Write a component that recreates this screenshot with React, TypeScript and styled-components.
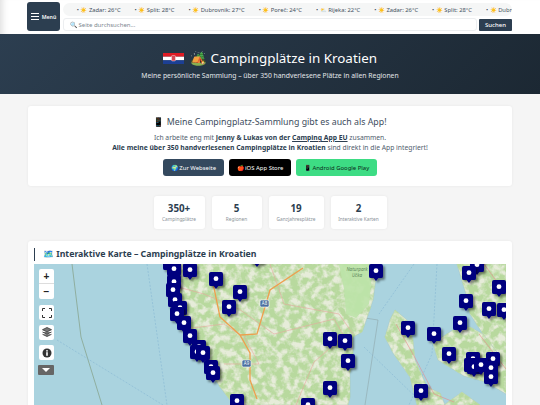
import React from "react"
import styled, { createGlobalStyle } from "styled-components"

const GlobalStyle = createGlobalStyle`
  html, body {
    margin: 0;
    height: 405px;
    overflow: hidden;
    background: #f5f5f5;
    font-family: "Noto Sans", "Open Sans", sans-serif;
    color: #2c3e50;
  }
`

const TopBar = styled.header`
  display: flex;
  gap: 3px;
  height: 34px;
  box-sizing: border-box;
  padding: 2px 28px 0 27px;
  background: #fff;
  box-shadow: inset 8px 0 7px -6px rgba(0, 0, 0, 0.14);
`
const MenuButton = styled.button`
  display: flex;
  align-items: center;
  justify-content: center;
  gap: 3px;
  width: 33px;
  height: 29px;
  padding: 0;
  border: 0;
  border-radius: 3px;
  background: #2c3e50;
  color: #fff;
  font: 600 5.2px "Noto Sans", sans-serif;
`
const BarColumn = styled.div`
  flex: 1;
  min-width: 0;
  display: flex;
  flex-direction: column;
  gap: 2px;
  padding-top: 1px;
`
const Ticker = styled.div`
  height: 13px;
  border-radius: 7px;
  background: #f5f6f6;
  overflow: hidden;
  display: flex;
  align-items: center;
`
const TickerTrack = styled.div`
  display: flex;
  gap: 14px;
  margin-left: -13px;
  white-space: nowrap;
  font-size: 5.8px;
  color: #44515e;
`
const TickerItem = styled.span`
  display: inline-flex;
  align-items: center;
  gap: 1.5px;
`
const SunIcon = styled.span`
  font-size: 5.5px;
`
const SearchRow = styled.form`
  display: flex;
  gap: 2px;
  align-items: center;
  margin: 0;
`
const SearchInput = styled.div`
  flex: 1;
  height: 13px;
  box-sizing: border-box;
  display: flex;
  align-items: center;
  gap: 2px;
  padding-left: 6px;
  border: 1px solid #eceef0;
  border-radius: 3px;
  font-size: 6px;
  color: #7d8790;
`
const SearchButton = styled.button`
  width: 33px;
  height: 12px;
  padding: 0;
  border: 0;
  border-radius: 1px;
  background: #2c3e50;
  color: #fff;
  font: 500 6px "Noto Sans", sans-serif;
`
const Hero = styled.section`
  height: 60px;
  background: linear-gradient(135deg, #2c3e50 0%, #1c2833 100%);
  color: #fff;
  text-align: center;
  display: flex;
  flex-direction: column;
  align-items: center;
  padding-top: 14px;
  box-sizing: border-box;
`
const HeroTitle = styled.h1`
  display: flex;
  align-items: center;
  gap: 6px;
  margin: 0;
  font-size: 13.4px;
  line-height: 20px;
  font-weight: 400;
`
const HeroSub = styled.p`
  margin: 3px 0 0;
  font-size: 6.8px;
  line-height: 10px;
  color: #e3e7ea;
`
const Main = styled.main`
  padding: 12px 28px 0;
  display: flex;
  flex-direction: column;
`
const Card = styled.section`
  background: #fff;
  border-radius: 3px;
  box-shadow: 0 0 3px rgba(0, 0, 0, 0.06);
`
const AppCard = styled(Card)`
  height: 80px;
  box-sizing: border-box;
  padding-top: 10px;
  text-align: center;
`
const AppTitle = styled.h2`
  margin: 0;
  font-size: 8.8px;
  line-height: 12px;
  font-weight: 400;
  color: #3d4d5d;
`
const AppText = styled.p`
  margin: 5px 0 0;
  font-size: 6.75px;
  line-height: 10px;
  color: #50606e;
  strong {
    font-weight: 700;
    color: #2c3e50;
  }
  u {
    font-weight: 700;
    color: #2c3e50;
  }
`
const ButtonRow = styled.div`
  display: flex;
  justify-content: center;
  gap: 5.5px;
  margin-top: 6px;
`
const StoreButton = styled.a<{ $bg: string; $fg: string }>`
  display: inline-flex;
  align-items: center;
  gap: 2px;
  height: 17px;
  padding: 0 7.5px;
  border-radius: 3px;
  background: ${p => p.$bg};
  color: ${p => p.$fg};
  font-size: 5.95px;
`
const StatsRow = styled.div`
  display: flex;
  justify-content: center;
  gap: 7px;
  margin-top: 10px;
`
const StatCard = styled(Card)<{ $w: number }>`
  width: ${p => p.$w}px;
  height: 33px;
  text-align: center;
  padding-top: 7px;
  box-sizing: border-box;
`
const StatValue = styled.div`
  font-size: 9.8px;
  line-height: 11px;
  font-weight: 700;
  color: #2c3e50;
`
const StatLabel = styled.div`
  margin-top: 2px;
  font-size: 4.8px;
  line-height: 7px;
  color: #8b939a;
`
const MapCard = styled(Card)`
  margin-top: 12px;
  height: 200px;
  padding: 7px 6px 0;
`
const MapHeading = styled.h3`
  margin: 0 0 3px;
  height: 13px;
  line-height: 13px;
  padding-left: 8px;
  border-left: 1px solid #2c3e50;
  font-size: 8.75px;
  font-weight: 700;
  color: #2c3e50;
`
const MapStage = styled.div`
  position: relative;
  height: 141px;
  overflow: hidden;
  background: #aad3df;
`
const MapLayer = styled.svg`
  display: block;
  width: 472px;
  height: 141px;
`
const Pin = styled.svg`
  position: absolute;
  width: 14px;
  height: 17px;
  filter: drop-shadow(2px 2px 1px rgba(0, 0, 0, 0.45));
`
const Controls = styled.div`
  position: absolute;
  left: 4px;
  top: 5px;
  display: flex;
  flex-direction: column;
  align-items: flex-start;
`
const ZoomBox = styled.div`
  width: 15px;
  background: #fff;
  border-radius: 2px;
  margin-bottom: 6px;
  margin-left: 1px;
`
const ControlCell = styled.div<{ $last?: boolean }>`
  height: 15px;
  box-sizing: border-box;
  display: flex;
  align-items: center;
  justify-content: center;
  border-bottom: ${p => (p.$last ? "0" : "1px solid #ddd")};
  color: #222;
  font: 700 10px "Liberation Sans", sans-serif;
`
const ControlBox = styled.div`
  width: 15px;
  height: 15px;
  margin-left: 1px;
  margin-bottom: 5px;
  background: #fff;
  border-radius: 2px;
  display: flex;
  align-items: center;
  justify-content: center;
  color: #333;
`
const CollapseBox = styled.div`
  width: 16px;
  height: 10px;
  border-radius: 1px;
  background: #666;
  display: flex;
  align-items: center;
  justify-content: center;
`

const weather = [
  ["☀️", "Zadar: 26°C"],
  ["☀️", "Split: 28°C"],
  ["☀️", "Dubrovnik: 27°C"],
  ["☀️", "Poreč: 24°C"],
  ["⛅", "Rijeka: 22°C"],
  ["☀️", "Zadar: 26°C"],
  ["☀️", "Split: 28°C"],
  ["☀️", "Dubrovnik: 27°C"],
]

const stats: [string, string, number][] = [
  ["350+", "Campingplätze", 51],
  ["5", "Regionen", 50],
  ["19", "Ganzjahresplätze", 55],
  ["2", "Interaktive Karten", 56],
]

// dot centres in map coordinates
const pins = [
  [136, -1], [140, 5], [156, 6], [182, 15], [206, 28], [195, 43], [140, 18], [139, 26],
  [141, 36], [146, 44], [143, 50], [150, 59], [156, 72], [165, 83], [163, 88], [169, 89],
  [177, 103], [179, 109], [203, 137], [223, -7], [342, 7], [443, 1], [435, 9], [465, 23],
  [432, 37], [455, 45], [470, 46], [426, 59], [374, 64], [400, 70], [296, 75], [311, 77],
  [314, 97], [415, 90], [439, 96], [439, 95], [459, 95], [437, 101], [440, 103], [447, 101],
  [457, 104], [457, 113], [296, 124], [387, 127], [274, 141],
]

const Shield = ({ x, y, t }: { x: number; y: number; t: string }) => (
  <g>
    <rect x={x} y={y} width="9" height="7" rx="1.5" fill="#4a6f9f" stroke="#fff" strokeWidth=".6" />
    <text x={x + 4.5} y={y + 5.2} fontSize="4.4" fill="#fff" textAnchor="middle" fontFamily="Noto Sans">
      {t}
    </text>
  </g>
)

const MapArt = () => (
  <MapLayer viewBox="0 0 472 141">
    <defs>
      <filter id="mottle" x="0" y="0" width="100%" height="100%" colorInterpolationFilters="sRGB">
        <feTurbulence type="fractalNoise" baseFrequency="0.14" numOctaves="3" seed="7" />
        <feColorMatrix values="0 0 0 0 .72  0 0 0 0 .85  0 0 0 0 .62  3.6 0 0 0 -1.15" />
        <feComposite in2="SourceAlpha" operator="in" />
        <feMerge>
          <feMergeNode in="SourceGraphic" />
          <feMergeNode />
        </feMerge>
      </filter>
    </defs>
    <rect width="472" height="141" fill="#aad3df" />
    {/* sea borders */}
    <path d="M38 0 L47 73 L68 141" fill="none" stroke="#8fae9f" strokeWidth="1" />
    <path d="M113 0 L133 141 M23 76 L129 141" fill="none" stroke="#7fb0d0" strokeWidth=".5" strokeDasharray="2 1.5" />
    <path d="M344 56 L331 141 M331 54 L344 56" fill="none" stroke="#8a9ea0" strokeWidth=".5" />
    <path d="M403 0 L398 90 L375 141 M330 83 L390 141 M380 0 L345 50" fill="none" stroke="#7fb0d0" strokeWidth=".5" strokeDasharray="2 1.5" />
    {/* Istria and the islands */}
    <g filter="url(#mottle)" fill="#e6ecd9" stroke="#9db9a8" strokeWidth=".3">
      <path d="M132 0 L342 0 L342 13 L339 36 L333 54 L328 68 L319 73 L319 89 L316 109 L316 133 L314 141 L200 141 L186 123 L176 107 L160 82 L148 60 L140 35 L134 12 Z" />
      <path d="M361 46 L373 56 L379 76 L381 96 L393 123 L406 129 L411 141 L383 141 L376 113 L359 89 L351 73 L356 56 Z" />
      <path d="M423 0 L472 0 L472 100 L449 70 L436 50 L432 30 Z" />
      <path d="M399 79 L419 66 L436 63 L449 70 L472 100 L472 130 L452 118 L430 112 L404 96 Z" />
      <path d="M410 141 L428 128 L446 141 Z" />
    </g>
    <path d="M305 0 L339 0 L335 40 L322 54 L312 50 L310 25 Z" fill="#bde3a9" opacity=".9" />
    <text fontSize="4.6" fontStyle="italic" fill="#5d8a5d" fontFamily="Noto Sans" textAnchor="middle">
      <tspan x="323" y="7">Naturpark</tspan>
      <tspan x="323" y="13">Učka</tspan>
    </text>
    {/* roads */}
    <g fill="none" stroke="#e8a8a0" strokeWidth=".6">
      <path d="M140 22 L170 30 L205 45 L240 70 L300 55 L310 72 L280 98 L262 141" />
      <path d="M236 0 L250 40 L305 50 L319 70 M150 65 L190 60 L206 71 M210 72 L225 100 L190 100" />
      <path d="M450 0 L472 30 M362 60 L380 92 L400 130 L420 138 M445 70 L472 105" stroke="#e58c8c" />
    </g>
    <path d="M179 19 L186 53 L206 71 L216 89 L216 116 L223 135 M206 71 L223 70 L236 26 L269 4" fill="none" stroke="#ee9f4e" strokeWidth="1.3" />
    <Shield x={226} y={36} t="A8" />
    <Shield x={208} y={96} t="A9" />
  </MapLayer>
)

const App: React.FC = () => (
  <>
    <GlobalStyle />
    <TopBar>
      <MenuButton>
        <svg width="8" height="7" viewBox="0 0 8 7">
          <path d="M0 .5h8M0 3.500h8M0 6.500h8" stroke="#fff" strokeWidth="1" />
        </svg>
        Menü
      </MenuButton>
      <BarColumn>
        <Ticker>
          <TickerTrack>
            <span>26°C</span>
            {weather.map(([icon, text], i) => (
              <TickerItem key={i}>
                <span>•</span>
                <SunIcon>{icon}</SunIcon>
                {text}
              </TickerItem>
            ))}
          </TickerTrack>
        </Ticker>
        <SearchRow>
          <SearchInput>🔍 Seite durchsuchen...</SearchInput>
          <SearchButton type="button">Suchen</SearchButton>
        </SearchRow>
      </BarColumn>
    </TopBar>
    <Hero>
      <HeroTitle>
        <svg width="21" height="11" viewBox="0 0 21 11">
          <rect width="21" height="3.7" fill="#e01b24" />
          <rect y="3.7" width="21" height="3.6" fill="#fff" />
          <rect y="7.3" width="21" height="3.7" fill="#1c3f94" />
          <rect x="8.500" y="2.500" width="4" height="5.500" rx="1" fill="#d94a55" stroke="#fff" strokeWidth=".4" />
        </svg>
        <span>🏕️ Campingplätze in Kroatien</span>
      </HeroTitle>
      <HeroSub>Meine persönliche Sammlung – über 350 handverlesene Plätze in allen Regionen</HeroSub>
    </Hero>
    <Main>
      <AppCard>
        <AppTitle>📱 Meine Campingplatz-Sammlung gibt es auch als App!</AppTitle>
        <AppText>
          Ich arbeite eng mit <strong>Jenny &amp; Lukas von der</strong> <u>Camping App EU</u> zusammen.
          <br />
          <strong>Alle meine über 350 handverlesenen Campingplätze in Kroatien</strong> sind direkt in die App integriert!
        </AppText>
        <ButtonRow>
          <StoreButton $bg="#34495e" $fg="#fff">🌍 Zur Webseite</StoreButton>
          <StoreButton $bg="#000" $fg="#fff">🍎 iOS App Store</StoreButton>
          <StoreButton $bg="#3ddc84" $fg="#0b2a1a">📱 Android Google Play</StoreButton>
        </ButtonRow>
      </AppCard>
      <StatsRow>
        {stats.map(([value, label, w]) => (
          <StatCard key={label} $w={w}>
            <StatValue>{value}</StatValue>
            <StatLabel>{label}</StatLabel>
          </StatCard>
        ))}
      </StatsRow>
      <MapCard>
        <MapHeading>🗺️ Interaktive Karte – Campingplätze in Kroatien</MapHeading>
        <MapStage>
          <MapArt />
          {pins.map(([x, y], i) => (
            <Pin key={i} viewBox="0 0 15 18" style={{ left: x - 7, top: y - 7 }}>
              <path d="M2 0h11a2 2 0 0 1 2 2v11a2 2 0 0 1-2 2h-3l-2.500 3-2.500-3H2a2 2 0 0 1-2-2V2a2 2 0 0 1 2-2z" fill="#00007f" />
              <circle cx="7.500" cy="7" r="2.600" fill="#fff" />
            </Pin>
          ))}
          <Controls>
            <ZoomBox>
              <ControlCell>+</ControlCell>
              <ControlCell $last>−</ControlCell>
            </ZoomBox>
            <ControlBox>
              <svg width="10" height="10" viewBox="0 0 10 10" fill="none" stroke="#333" strokeWidth="1">
                <path d="M.5 3V.5H3M7 .5h2.500V3M9.500 7v2.500H7M3 9.500H.5V7" />
              </svg>
            </ControlBox>
            <ControlBox>
              <svg width="10" height="11" viewBox="0 0 10 11">
                <path d="M5 .5l4.500 2.200L5 4.900.5 2.700zM.5 5L5 7.200 9.500 5M.5 7.300L5 9.500l4.500-2.200" fill="#777" stroke="#333" strokeWidth=".8" />
              </svg>
            </ControlBox>
            <ControlBox>
              <svg width="10" height="10" viewBox="0 0 10 10">
                <circle cx="5" cy="5" r="4.500" fill="#333" />
                <rect x="4.200" y="4.200" width="1.600" height="3.600" fill="#fff" />
                <circle cx="5" cy="2.800" r=".9" fill="#fff" />
              </svg>
            </ControlBox>
            <CollapseBox>
              <svg width="8" height="4" viewBox="0 0 8 4">
                <path d="M0 0h8L4 4z" fill="#fff" />
              </svg>
            </CollapseBox>
          </Controls>
        </MapStage>
      </MapCard>
    </Main>
  </>
)

export default App
